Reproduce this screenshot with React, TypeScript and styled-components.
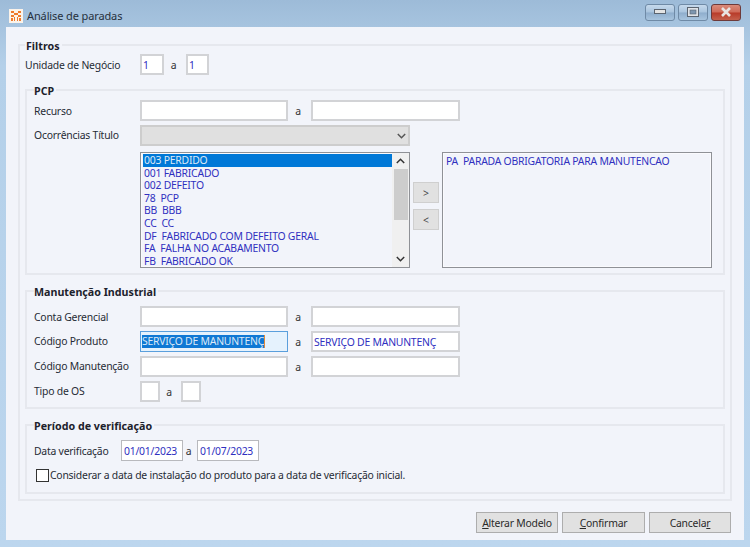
import React from "react";
import styled, { createGlobalStyle } from "styled-components";

const FONT = `"Noto Sans", "DejaVu Sans", sans-serif`;

const Global = createGlobalStyle`
  html, body { margin: 0; padding: 0; }
  #root { width: 750px; height: 547px; overflow: hidden; }
`;

const Frame = styled.div`
  width: 750px;
  height: 547px;
  box-sizing: border-box;
  display: flex;
  flex-direction: column;
  background: linear-gradient(180deg, #9dbbd8 0%, #b4d0e9 12%, #bcd6ee 100%);
  font-family: ${FONT};
  font-size: 10.4px;
  letter-spacing: -0.22px;
  color: #262b35;
`;

const TitleBar = styled.div`
  height: 27px;
  flex: none;
  display: flex;
  align-items: center;
  padding: 0 9px 0 9px;
  gap: 4px;
  font-size: 11px;
  letter-spacing: -0.12px;
  color: #26303c;
`;

const TitleText = styled.span`
  flex: 1;
  padding-top: 4px;
`;

const AppIcon = styled.svg`
  width: 14px;
  height: 14px;
  margin-top: 4px;
  flex: none;
`;

const WinButtons = styled.div`
  display: flex;
  gap: 3px;
  margin-top: -3px;
`;

const WinButton = styled.div<{ $close?: boolean }>`
  width: 30px;
  height: 17px;
  box-sizing: border-box;
  border: 1px solid ${(p) => (p.$close ? "#6e3a3a" : "#6f8aa6")};
  border-radius: 3px;
  display: flex;
  align-items: center;
  justify-content: center;
  background: ${(p) =>
    p.$close
      ? "linear-gradient(180deg,#d98a7a 0%,#cf6a58 48%,#b83a28 52%,#c4604c 100%)"
      : "linear-gradient(180deg,#c6d9ec 0%,#a9c4de 48%,#8eadcc 52%,#a8c4de 100%)"};
`;

const Client = styled.div`
  flex: 1;
  margin: 0 6px 7px;
  padding: 11px 12px 0;
  background: #f2f4fa;
  display: flex;
  flex-direction: column;
`;

const Group = styled.fieldset<{ $inner?: boolean; $top?: number; $pt?: number; $pb?: number }>`
  margin: ${(p) => p.$top ?? 0}px 0 0;
  min-width: 0;
  padding: ${(p) => p.$pt ?? 3}px 5px ${(p) => p.$pb ?? 5}px ${(p) => (p.$inner ? 7 : 5)}px;
  border: 2px solid #e6e8ee;
  box-sizing: border-box;
  display: flex;
  flex-direction: column;
`;

const GroupTitle = styled.legend<{ $inner?: boolean }>`
  font-weight: bold;
  font-size: 10.7px;
  letter-spacing: 0;
  line-height: 16px;
  height: 14px;
  color: #1d222c;
  padding: 0 2px 0 ${(p) => (p.$inner ? 0 : 1)}px;
`;

const Row = styled.div<{ $top?: number }>`
  display: flex;
  align-items: center;
  height: 21px;
  margin-top: ${(p) => p.$top ?? 0}px;
`;

const Label = styled.label<{ $w?: number; $raise?: boolean }>`
  width: ${(p) => p.$w ?? 106}px;
  flex: none;
  line-height: 14px;
  padding-bottom: ${(p) => (p.$raise ? 2 : 0)}px;
`;

const Sep = styled.span<{ $w?: number }>`
  width: ${(p) => p.$w ?? 23}px;
  box-sizing: border-box;
  padding-right: 3px;
  flex: none;
  text-align: center;
  color: #333;
`;

const Input = styled.input<{ $w: number }>`
  width: ${(p) => p.$w}px;
  height: 21px;
  box-sizing: border-box;
  flex: none;
  padding: 0 1px;
  background: #fff;
  border: 2px solid #d2d3d6;
  font-family: ${FONT};
  font-size: 10.4px;
  letter-spacing: -0.22px;
  color: #2f2fc0;
  outline: none;
`;

const DateInput = styled(Input)`
  border-width: 1px;
  border-color: #b8b9bd;
  padding: 0 2px;
`;

const ActiveField = styled.div<{ $w: number }>`
  width: ${(p) => p.$w}px;
  height: 21px;
  box-sizing: border-box;
  flex: none;
  padding: 0 1px;
  background: #e5f2fd;
  border: 1px solid #5a9fdc;
  display: flex;
  align-items: center;
`;

const Selected = styled.span`
  background: #0f78d4;
  color: #dce9f7;
  line-height: 13px;
  border-right: 1px solid #e08a3a;
  white-space: pre;
`;

const Combo = styled.div`
  width: 270px;
  height: 21px;
  box-sizing: border-box;
  background: #e0e0e0;
  border: 2px solid #cdcdcd;
  display: flex;
  align-items: center;
  justify-content: flex-end;
  padding-right: 2px;
`;

const ListsRow = styled.div`
  display: flex;
  margin: 6px 0 0 106px;
`;

const ListBox = styled.div`
  width: 270px;
  height: 116px;
  box-sizing: border-box;
  border: 1px solid #8f9196;
  box-shadow: inset 0 0 0 1px #fafafd;
  display: flex;
  overflow: hidden;
`;

const Items = styled.div`
  flex: 1;
  padding: 1px 0 0 2px;
  min-width: 0;
`;

const Item = styled.div<{ $selected?: boolean }>`
  height: 12.6px;
  line-height: 12.6px;
  white-space: pre;
  padding-left: 1px;
  color: ${(p) => (p.$selected ? "#dce9f7" : "#3030bf")};
  background: ${(p) => (p.$selected ? "#0078d7" : "transparent")};
`;

const Scroll = styled.div`
  width: 17px;
  flex: none;
  background: #f0f0f0;
  display: flex;
  flex-direction: column;
  align-items: center;
`;

const ScrollEnd = styled.div`
  height: 16px;
  flex: none;
  display: flex;
  align-items: center;
  justify-content: center;
`;

const Thumb = styled.div`
  width: 14px;
  height: 51px;
  background: #cdcdcd;
  margin-bottom: auto;
`;

const MoveColumn = styled.div`
  width: 32px;
  flex: none;
  display: flex;
  flex-direction: column;
  align-items: center;
  padding-top: 30px;
  gap: 6px;
`;

const MoveButton = styled.button`
  width: 26px;
  height: 21px;
  padding: 0;
  background: #e1e1e1;
  border: 1px solid #cfcfcf;
  font-family: ${FONT};
  font-size: 10.4px;
  color: #444;
`;

const RightText = styled.div`
  padding: 2px 0 0 3px;
  color: #3030bf;
  line-height: 13px;
  white-space: pre;
`;

const CheckRow = styled.div`
  display: flex;
  align-items: center;
  margin: 7px 0 0 2px;
  height: 14px;
`;

const CheckBox = styled.span`
  width: 13px;
  height: 13px;
  box-sizing: border-box;
  border: 1px solid #333;
  background: #fff;
  margin-right: 1px;
  flex: none;
`;

const Footer = styled.div`
  display: flex;
  justify-content: flex-end;
  gap: 4px;
  margin: 11px 1px 0 0;
`;

const FootButton = styled.button<{ $w: number }>`
  width: ${(p) => p.$w}px;
  height: 21px;
  padding: 0;
  background: #e1e1e1;
  border: 1px solid #adadad;
  font-family: ${FONT};
  font-size: 10.4px;
  letter-spacing: -0.22px;
  color: #2a2a2a;
`;

const Chevron = ({ up, color = "#444" }: { up?: boolean; color?: string }) => (
  <svg width="9" height="6" viewBox="0 0 9 6" fill="none">
    <path d={up ? "M.8 5 L4.5 1.3 L8.2 5" : "M.8 1 L4.5 4.7 L8.2 1"} stroke={color} strokeWidth="1.5" />
  </svg>
);

const left = [
  "003 PERDIDO",
  "001 FABRICADO",
  "002 DEFEITO",
  "78  PCP",
  "BB  BBB",
  "CC  CC",
  "DF  FABRICADO COM DEFEITO GERAL",
  "FA  FALHA NO ACABAMENTO",
  "FB  FABRICADO OK",
];

export default function App() {
  return (
    <Frame>
      <Global />
      <TitleBar>
        <AppIcon viewBox="0 0 14 14">
          <rect width="14" height="14" fill="#fbf3ea" />
          <path d="M2 2h3v2H2zM9 2h3v2H9zM5 4h4v2H5zM2 6h3v2H2zM9 6h3v2H9zM5 8h1v4H5zM8 8h1v4H8zM2 9h2v3H2zM10 9h2v3h-2z" fill="#ee7a2c" />
        </AppIcon>
        <TitleText>Análise de paradas</TitleText>
        <WinButtons>
          <WinButton>
            <svg width="12" height="6" viewBox="0 0 12 6"><rect x=".5" y=".5" width="11" height="4" fill="#e4e4e4" stroke="#5b6470" /></svg>
          </WinButton>
          <WinButton>
            <svg width="12" height="10" viewBox="0 0 12 10"><rect x=".5" y=".5" width="11" height="9" fill="#dfe3e8" stroke="#5b6470" /><rect x="3" y="3" width="6" height="4" fill="#7d96b0" stroke="#5b6470" strokeWidth=".6" /></svg>
          </WinButton>
          <WinButton $close>
            <svg width="12" height="10" viewBox="0 0 12 10"><path d="M2 1 L10 9 M10 1 L2 9" stroke="#e9e4e2" strokeWidth="2.6" /></svg>
          </WinButton>
        </WinButtons>
      </TitleBar>
      <Client>
        <Group $pt={2}>
          <GroupTitle>Filtros</GroupTitle>
          <Row>
            <Label $w={115}>Unidade de Negócio</Label>
            <Input $w={24} defaultValue="1" />
            <Sep $w={22}>a</Sep>
            <Input $w={23} defaultValue="1" />
          </Row>

          <Group $inner $top={8}>
            <GroupTitle $inner>PCP</GroupTitle>
            <Row>
              <Label>Recurso</Label>
              <Input $w={148} />
              <Sep>a</Sep>
              <Input $w={149} />
            </Row>
            <Row $top={4}>
              <Label $raise>Ocorrências Título</Label>
              <Combo><Chevron color="#555" /></Combo>
            </Row>
            <ListsRow>
              <ListBox>
                <Items>
                  {left.map((t, i) => (
                    <Item key={t} $selected={i === 0}>{t}</Item>
                  ))}
                </Items>
                <Scroll>
                  <ScrollEnd><Chevron up color="#333" /></ScrollEnd>
                  <Thumb />
                  <ScrollEnd><Chevron color="#333" /></ScrollEnd>
                </Scroll>
              </ListBox>
              <MoveColumn>
                <MoveButton>&gt;</MoveButton>
                <MoveButton>&lt;</MoveButton>
              </MoveColumn>
              <ListBox>
                <RightText>PA  PARADA OBRIGATORIA PARA MANUTENCAO</RightText>
              </ListBox>
            </ListsRow>
          </Group>

          <Group $inner $top={9} $pt={8}>
            <GroupTitle $inner>Manutenção Industrial</GroupTitle>
            <Row>
              <Label>Conta Gerencial</Label>
              <Input $w={148} />
              <Sep>a</Sep>
              <Input $w={149} />
            </Row>
            <Row $top={4}>
              <Label $raise>Código Produto</Label>
              <ActiveField $w={148}><Selected>SERVIÇO DE MANUNTENÇ</Selected></ActiveField>
              <Sep>a</Sep>
              <Input $w={149} defaultValue="SERVIÇO DE MANUNTENÇ" />
            </Row>
            <Row $top={4}>
              <Label $raise>Código Manutenção</Label>
              <Input $w={148} />
              <Sep>a</Sep>
              <Input $w={149} />
            </Row>
            <Row $top={4}>
              <Label $raise>Tipo de OS</Label>
              <Input $w={20} />
              <Sep $w={21}>a</Sep>
              <Input $w={20} />
            </Row>
          </Group>

          <Group $inner $top={9} $pt={8} $pb={10}>
            <GroupTitle $inner>Período de verificação</GroupTitle>
            <Row>
              <Label $w={87}>Data verificação</Label>
              <DateInput $w={62} defaultValue="01/01/2023" />
              <Sep $w={14}>a</Sep>
              <DateInput $w={62} defaultValue="01/07/2023" />
            </Row>
            <CheckRow>
              <CheckBox />
              <span>Considerar a data de instalação do produto para a data de verificação inicial.</span>
            </CheckRow>
          </Group>
        </Group>
        <Footer>
          <FootButton $w={82}><u>A</u>lterar Modelo</FootButton>
          <FootButton $w={83}><u>C</u>onfirmar</FootButton>
          <FootButton $w={82}>Cancela<u>r</u></FootButton>
        </Footer>
      </Client>
    </Frame>
  );
}
